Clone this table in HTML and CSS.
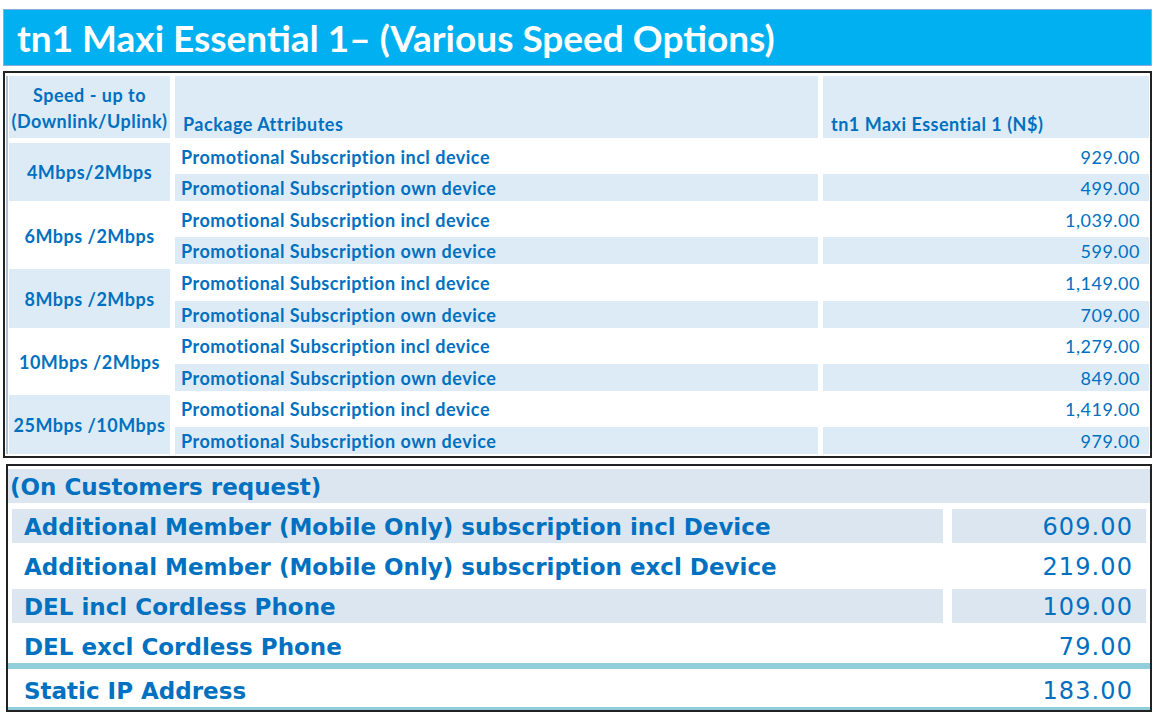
FILE: index.html
```html
<!DOCTYPE html>
<html>
<head>
<meta charset="utf-8">
<link rel="stylesheet" href="styles.css">
</head>
<body>
<div class="page">
  <div class="title">tn1 Maxi Essential 1– (Various Speed Options)</div>

  <div class="plans">
    <div class="grid">
      <div class="c1 hd hd-speed">Speed - up to<br>(Downlink/Uplink)</div>
      <div class="c2 hd">Package Attributes</div>
      <div class="c3 hd hd-left">tn1 Maxi Essential 1 (N$)</div>

      <div class="c1 speed blue">4Mbps/2Mbps</div>
      <div class="c2 attr">Promotional Subscription incl device</div>
      <div class="c3 price">929.00</div>
      <div class="c2 attr blue">Promotional Subscription own device</div>
      <div class="c3 price blue">499.00</div>

      <div class="c1 speed">6Mbps /2Mbps</div>
      <div class="c2 attr">Promotional Subscription incl device</div>
      <div class="c3 price">1,039.00</div>
      <div class="c2 attr blue">Promotional Subscription own device</div>
      <div class="c3 price blue">599.00</div>

      <div class="c1 speed blue">8Mbps /2Mbps</div>
      <div class="c2 attr">Promotional Subscription incl device</div>
      <div class="c3 price">1,149.00</div>
      <div class="c2 attr blue">Promotional Subscription own device</div>
      <div class="c3 price blue">709.00</div>

      <div class="c1 speed">10Mbps /2Mbps</div>
      <div class="c2 attr">Promotional Subscription incl device</div>
      <div class="c3 price">1,279.00</div>
      <div class="c2 attr blue">Promotional Subscription own device</div>
      <div class="c3 price blue">849.00</div>

      <div class="c1 speed blue">25Mbps /10Mbps</div>
      <div class="c2 attr">Promotional Subscription incl device</div>
      <div class="c3 price">1,419.00</div>
      <div class="c2 attr blue">Promotional Subscription own device</div>
      <div class="c3 price blue">979.00</div>
    </div>
  </div>

  <div class="extras">
    <div class="ex-head">(On Customers request)</div>
    <div class="ex-row shaded">
      <div class="ex-label">Additional Member (Mobile Only) subscription incl Device</div>
      <div class="ex-price">609.00</div>
    </div>
    <div class="ex-row">
      <div class="ex-label">Additional Member (Mobile Only) subscription excl Device</div>
      <div class="ex-price">219.00</div>
    </div>
    <div class="ex-row shaded">
      <div class="ex-label">DEL incl Cordless Phone</div>
      <div class="ex-price">109.00</div>
    </div>
    <div class="ex-row">
      <div class="ex-label">DEL excl Cordless Phone</div>
      <div class="ex-price">79.00</div>
    </div>
    <div class="ex-row ex-last">
      <div class="ex-label">Static IP Address</div>
      <div class="ex-price">183.00</div>
    </div>
  </div>
</div>
</body>
</html>
```

FILE: styles.css
```css
* { box-sizing: border-box; }

html, body {
  margin: 0;
  padding: 0;
  background: #ffffff;
}

.page {
  width: 1156px;
  height: 715px;
  overflow: hidden;
  padding: 9px 4px 0 3px;
  font-family: "Lato", "Liberation Sans", sans-serif;
  color: #0070c0;
}

.title {
  height: 57px;
  background: #00b0f0;
  border: 1px solid #8faadc;
  color: #ffffff;
  font-weight: 700;
  font-size: 37px;
  line-height: 56px;
  padding-left: 13px;
  white-space: nowrap;
}

.plans {
  margin-top: 5px;
  width: 1149px;
  border: 2px solid #222222;
  padding: 3px 2px 2px 1px;
}

.grid {
  border-left: 2px solid #a8c3dc;
  padding-left: 1px;
  display: grid;
  grid-template-columns: 161px 643px 326px;
  grid-template-rows: 62px repeat(10, 27px);
  column-gap: 5px;
  row-gap: 4.6px;
  font-size: 18px;
  letter-spacing: 0.5px;
  font-weight: 700;
  white-space: nowrap;
}

.blue { background: #ddebf7; }

.hd {
  background: #ddebf7;
  display: flex;
  align-items: flex-end;
  padding: 0 9px 3px 8px;
}

.hd-speed {
  align-items: center;
  justify-content: center;
  text-align: center;
  line-height: 26px;
  padding: 2px 0 0 0;
}

.c1 { grid-column: 1; }
.c2 { grid-column: 2; }
.c3 { grid-column: 3; }

.speed {
  grid-row: span 2;
  display: flex;
  align-items: center;
  justify-content: center;
  padding-top: 1px;
}

.attr {
  display: flex;
  align-items: center;
  padding: 1px 0 0 6px;
}

.price {
  display: flex;
  align-items: center;
  justify-content: flex-end;
  padding: 1px 9px 0 0;
  font-weight: 400;
}

.extras {
  margin-top: 6px;
  margin-left: 3px;
  width: 1146px;
  height: 248px;
  border: 2px solid #222222;
  padding-top: 3px;
  overflow: hidden;
  font-family: "DejaVu Sans", "Verdana", sans-serif;
  font-size: 23px;
}

.ex-head {
  height: 34px;
  background: #dce6f1;
  font-weight: 700;
  line-height: 37px;
  padding-left: 2px;
  white-space: nowrap;
}

.ex-row {
  display: grid;
  grid-template-columns: 931px 194px;
  column-gap: 9px;
  height: 34px;
  margin: 6px 4px 0 4px;
  align-items: center;
}

.ex-row.shaded .ex-label,
.ex-row.shaded .ex-price {
  background: #dce6f1;
}

.ex-label,
.ex-price {
  height: 100%;
  display: flex;
  align-items: center;
  padding-top: 3px;
  white-space: nowrap;
}

.ex-label {
  font-weight: 700;
  padding-left: 12px;
}

.ex-price {
  justify-content: flex-end;
  padding-right: 13px;
  font-size: 24px;
  letter-spacing: 1.1px;
}

.ex-last {
  margin: 0;
  height: 47px;
  padding: 0 4px;
  border-top: 6px solid #92cddc;
  border-bottom: 3px solid #92cddc;
}

.ex-last .ex-label,
.ex-last .ex-price {
  padding-top: 6px;
}
```
